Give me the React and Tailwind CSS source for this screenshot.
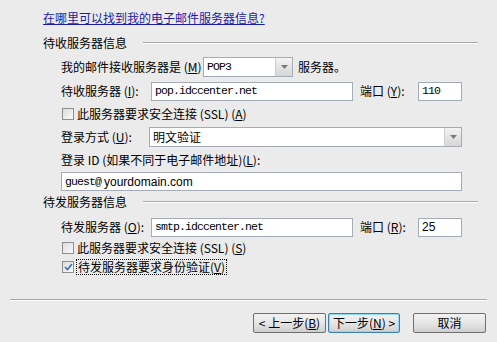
import React from "react";

const F = { fontFamily: '"Noto Sans CJK SC", "Liberation Sans", sans-serif' };

function U({ c }) {
  return (
    <span>
      (<span className="underline">{c}</span>)
    </span>
  );
}

function TextBox({ className = "", children, mono = true }) {
  return (
    <div
      className={`shrink-0 h-[19px] bg-white border border-[#a5acb5] flex items-center pl-[3px] text-[11.5px] tracking-[-0.9px] text-black ${className}`}
      style={mono ? { fontFamily: '"Liberation Mono", monospace' } : undefined}
    >
      {children}
    </div>
  );
}

function Arrow() {
  return (
    <div className="h-full w-[17px] border-l border-[#cfcfcf] bg-gradient-to-b from-[#f4f4f4] to-[#d6d6d6] flex items-center justify-center">
      <svg width="7" height="4" viewBox="0 0 7 4">
        <path d="M0 0 H7 L3.5 4 Z" fill="#7a7a7a" />
      </svg>
    </div>
  );
}

function Combo({ className = "", children, mono }) {
  return (
    <div className={`shrink-0 h-[20px] bg-white border border-[#a5acb5] flex items-stretch ${className}`}>
      <div
        className="flex-1 flex items-center pl-[3px] text-[12px]"
        style={mono ? { fontFamily: '"Liberation Mono", monospace', fontSize: "11.5px", letterSpacing: "-0.9px" } : undefined}
      >
        {children}
      </div>
      <Arrow />
    </div>
  );
}

function Check({ checked }) {
  return (
    <div className="shrink-0 w-[12px] h-[12px] border border-[#8e8f8f] bg-gradient-to-br from-[#dcdcdc] to-[#fbfbfb] flex items-center justify-center">
      {checked && (
        <svg width="9" height="8" viewBox="0 0 9 8">
          <path d="M1 4 L3.5 6.5 L8 1" stroke="#2b6fc4" strokeWidth="1.6" fill="none" />
        </svg>
      )}
    </div>
  );
}

function Header({ children }) {
  return (
    <div className="h-[14px] flex items-center pl-[43px] pr-[19px]">
      <span className="shrink-0 text-[12px] leading-[14px] w-[100px]">{children}</span>
      <div className="flex-1 border-t border-[#a8a8a8] border-b border-b-white" />
    </div>
  );
}

function Btn({ children, focus }) {
  return (
    <div
      className={`shrink-0 h-[20px] flex items-center justify-center text-[12px] rounded-[2px] bg-gradient-to-b from-[#f2f2f2] via-[#e6e6e6] to-[#cfcfcf] border ${
        focus ? "border-[#3c7fb1] shadow-[inset_0_0_0_1px_#8fd6f7] w-[72px]" : "border-[#707070] w-[73px]"
      }`}
    >
      {children}
    </div>
  );
}

export default function App() {
  return (
    <div className="w-[497px] h-[342px] bg-[#ebebeb] text-black overflow-hidden" style={F}>
      <div className="pt-[11px]">
        <div className="h-[14px] pl-[43px] flex items-center">
          <span className="text-[12px] leading-[14px] text-[#1c1ca8] underline">
            在哪里可以找到我的电子邮件服务器信息?
          </span>
        </div>

        <div className="mt-[11px]">
          <Header>待收服务器信息</Header>
        </div>

        <div className="mt-[7px] h-[20px] flex items-center pl-[61px] text-[12px]">
          <span className="shrink-0 w-[142px]">
            我的邮件接收服务器是 <U c="M" />
          </span>
          <Combo className="w-[90px]" mono>POP3</Combo>
          <span className="ml-[5px]">服务器。</span>
        </div>

        <div className="mt-[4px] h-[20px] flex items-center pl-[61px] text-[12px]">
          <span className="shrink-0 w-[90px]">
            待收服务器 <U c="I" />:
          </span>
          <TextBox className="w-[202px]">pop.idccenter.net</TextBox>
          <span className="shrink-0 ml-[7px] w-[58px]">
            端口 <U c="Y" />:
          </span>
          <TextBox className="w-[44px]">110</TextBox>
        </div>

        <div className="mt-[4px] h-[17px] flex items-center pl-[62px] text-[12px]">
          <Check />
          <span className="ml-[3px]">
            此服务器要求安全连接 (SSL) <U c="A" />
          </span>
        </div>

        <div className="mt-[5px] h-[20px] flex items-center pl-[61px] text-[12px]">
          <span className="shrink-0 w-[88px]">
            登录方式 <U c="U" />:
          </span>
          <Combo className="w-[313px]">明文验证</Combo>
        </div>

        <div className="mt-[6px] h-[14px] flex items-center pl-[61px] text-[12px]">
          <span>
            登录 ID (如果不同于电子邮件地址)<U c="L" />:
          </span>
        </div>

        <div className="mt-[5px] pl-[61px]">
          <TextBox className="w-[401px]" mono={false}>
            <span style={{ fontFamily: '"Liberation Mono", monospace' }}>guest@</span>
            <span className="text-[12px] tracking-normal ml-[3px]" style={{ fontFamily: '"Liberation Sans", sans-serif' }}>
              yourdomain.com
            </span>
          </TextBox>
        </div>

        <div className="mt-[4px]">
          <Header>待发服务器信息</Header>
        </div>

        <div className="mt-[8px] h-[20px] flex items-center pl-[61px] text-[12px]">
          <span className="shrink-0 w-[90px]">
            待发服务器 <U c="O" />:
          </span>
          <TextBox className="w-[202px]">smtp.idccenter.net</TextBox>
          <span className="shrink-0 ml-[7px] w-[58px]">
            端口 <U c="R" />:
          </span>
          <TextBox className="w-[44px]" mono={false}>
            <span className="text-[12px] tracking-normal" style={{ fontFamily: '"Liberation Sans", sans-serif' }}>25</span>
          </TextBox>
        </div>

        <div className="mt-[2px] h-[17px] flex items-center pl-[62px] text-[12px]">
          <Check />
          <span className="ml-[3px]">
            此服务器要求安全连接 (SSL) <U c="S" />
          </span>
        </div>

        <div className="mt-[2px] h-[17px] flex items-center pl-[62px] text-[12px]">
          <Check checked />
          <span className="ml-[2px] px-[1px] h-[16px] flex items-center border border-dotted border-black">
            待发服务器要求身份验证 <U c="V" />
          </span>
        </div>

        <div className="mt-[24px] mx-[10px] border-t border-[#a8a8a8] border-b border-b-white" />

        <div className="mt-[12px] flex justify-end pr-[11px]">
          <Btn>
            &lt; 上一步(<span className="underline">B</span>)
          </Btn>
          <div className="ml-[2px]">
            <Btn focus>
              下一步(<span className="underline">N</span>) &gt;
            </Btn>
          </div>
          <div className="ml-[13px]">
            <Btn>取消</Btn>
          </div>
        </div>
      </div>
    </div>
  );
}
